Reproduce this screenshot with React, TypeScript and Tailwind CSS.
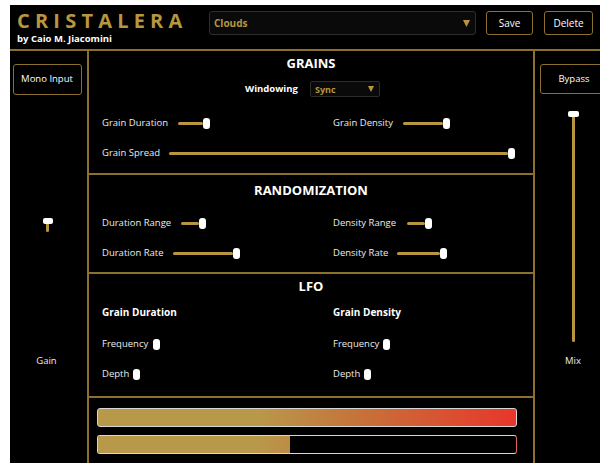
import React from "react";

const FONT = { fontFamily: '"Open Sans", "Noto Sans", Arial, sans-serif' };

type SliderProps = { labelW: number; track: number; label: string };

function HSlider({ labelW, track, label }: SliderProps) {
  return (
    <div className="flex items-center h-[30px]">
      <div className="text-[9.5px] text-[#ececec] whitespace-nowrap" style={{ width: labelW }}>
        {label}
      </div>
      {track > 0 && <div className="h-[3px] rounded-full bg-[#b8963f]" style={{ width: track }} />}
      <div className="w-[7px] h-[11px] rounded-[3px] bg-white shrink-0" />
    </div>
  );
}

function Section({ title, className, children }: { title: string; className: string; children?: React.ReactNode }) {
  return (
    <div className={`border-b-2 border-[#8c702e] flex flex-col ${className}`}>
      <div className="text-[13px] font-bold text-white text-center leading-none">{title}</div>
      {children}
    </div>
  );
}

export default function App() {
  return (
    <div className="w-[600px] h-[463px] overflow-hidden bg-white pl-[10px] pt-[5px]" style={FONT}>
      <div className="w-[611px] h-[458px] bg-black flex flex-col">
        {/* Header */}
        <div className="h-[46px] border-b-2 border-[#8c702e] flex items-start pl-[7px] shrink-0">
          <div className="w-[192px] flex flex-col">
            <div className="text-[20px] font-bold tracking-[5.2px] text-[#b8963f] leading-[18px] mt-[7px]">CRISTALERA</div>
            <div className="text-[9.5px] font-bold text-white leading-[11px] mt-[3px]">by Caio M. Jiacomini</div>
          </div>
          <div className="mt-[6px] w-[267px] h-[24px] rounded-[3px] border border-[#2c2c2c] bg-[#0a0a0a] flex items-center justify-between pl-[4px] pr-[5px]">
            <span className="text-[10px] font-bold text-[#b8963f]">Clouds</span>
            <svg width="7" height="7" viewBox="0 0 7 7"><path d="M0 0H7L3.5 7Z" fill="#b8963f" /></svg>
          </div>
          <button className="mt-[6px] ml-[10px] w-[47px] h-[24px] rounded-[3px] border border-[#8c702e] text-[10px] text-white flex items-center justify-center">Save</button>
          <button className="mt-[6px] ml-[11px] w-[49px] h-[24px] rounded-[3px] border border-[#8c702e] text-[10px] text-white flex items-center justify-center">Delete</button>
        </div>

        {/* Body */}
        <div className="flex flex-1 min-h-0">
          {/* Left: input & gain */}
          <div className="w-[79px] border-r-2 border-[#8c702e] flex flex-col items-center shrink-0">
            <button className="mt-[13px] ml-[-3px] w-[69px] h-[31px] rounded-[3px] border border-[#8c702e] text-[9.5px] text-white flex items-center justify-center">Mono Input</button>
            <div className="mt-[123px] ml-[-2px] flex flex-col items-center">
              <div className="w-[10px] h-[6px] rounded-[2px] bg-white" />
              <div className="w-[3px] h-[8px] bg-[#b8963f] rounded-b-full" />
            </div>
            <div className="mt-[122px] ml-[-4px] text-[9.5px] text-[#ececec] leading-[14px]">Gain</div>
          </div>

          {/* Center */}
          <div className="w-[446px] border-r-2 border-[#8c702e] flex flex-col shrink-0">
            <Section title="GRAINS" className="h-[124px] pt-[6px]">
              <div className="flex items-center h-[26px] mt-[6px] pl-[156px]">
                <div className="w-[65px] text-[9.5px] font-bold text-white">Windowing</div>
                <div className="w-[70px] h-[16px] rounded-[2px] border border-[#2c2c2c] bg-[#0a0a0a] flex items-center justify-between pl-[4px] pr-[5px]">
                  <span className="text-[9px] font-bold text-[#b8963f] leading-none">Sync</span>
                  <svg width="6" height="6" viewBox="0 0 6 6"><path d="M0 0H6L3 6Z" fill="#b8963f" /></svg>
                </div>
              </div>
              <div className="grid grid-cols-[231px_1fr] pl-[13px] mt-[6px]">
                <HSlider label="Grain Duration" labelW={76} track={25} />
                <HSlider label="Grain Density" labelW={70} track={40} />
              </div>
              <div className="pl-[13px]">
                <HSlider label="Grain Spread" labelW={67} track={339} />
              </div>
            </Section>

            <Section title="RANDOMIZATION" className="h-[99px] pt-[9px]">
              <div className="grid grid-cols-[231px_1fr] pl-[13px] mt-[11px]">
                <HSlider label="Duration Range" labelW={79} track={18} />
                <HSlider label="Density Range" labelW={74} track={18} />
                <HSlider label="Duration Rate" labelW={71} track={60} />
                <HSlider label="Density Rate" labelW={64} track={43} />
              </div>
            </Section>

            <Section title="LFO" className="h-[124px] pt-[6px]">
              <div className="grid grid-cols-[231px_1fr] pl-[13px] mt-[5px]">
                <div className="h-[28px] flex items-center text-[10px] font-bold text-white">Grain Duration</div>
                <div className="h-[28px] flex items-center text-[10px] font-bold text-white">Grain Density</div>
              </div>
              <div className="grid grid-cols-[231px_1fr] pl-[13px] mt-[3px]">
                <HSlider label="Frequency" labelW={51} track={0} />
                <HSlider label="Frequency" labelW={50} track={0} />
                <HSlider label="Depth" labelW={31} track={0} />
                <HSlider label="Depth" labelW={31} track={0} />
              </div>
            </Section>

            {/* Output meters */}
            <div className="flex flex-col pl-[8px] pt-[10px] gap-[8px]">
              <div className="w-[420px] h-[19px] rounded-[3px] border border-[#d6d6d6] bg-[linear-gradient(to_right,#b8994a_0%,#b8994a_38%,#c6733a_62%,#e8362a_100%)]" />
              <div className="w-[420px] h-[19px] rounded-[3px] border border-[#d6d6d6] border-r-[#e0605a] overflow-hidden bg-black">
                <div className="w-[192px] h-full bg-[linear-gradient(to_right,#b8994a_0%,#b8994a_38%,#c6733a_62%,#e8362a_100%)] bg-[length:418px_100%]" />
              </div>
            </div>
          </div>

          {/* Right: bypass & mix */}
          <div className="w-[76px] flex flex-col items-center shrink-0">
            <button className="mt-[13px] ml-[2px] w-[68px] h-[30px] rounded-[3px] border border-[#8c702e] text-[9.5px] text-white flex items-center justify-center">Bypass</button>
            <div className="mt-[17px] flex flex-col items-center">
              <div className="w-[11px] h-[6px] rounded-[2px] bg-white" />
              <div className="w-[3px] h-[225px] bg-[#b8963f] rounded-b-full" />
            </div>
            <div className="mt-[12px] text-[9.5px] text-[#ececec] leading-[14px]">Mix</div>
          </div>
        </div>
      </div>
    </div>
  );
}
